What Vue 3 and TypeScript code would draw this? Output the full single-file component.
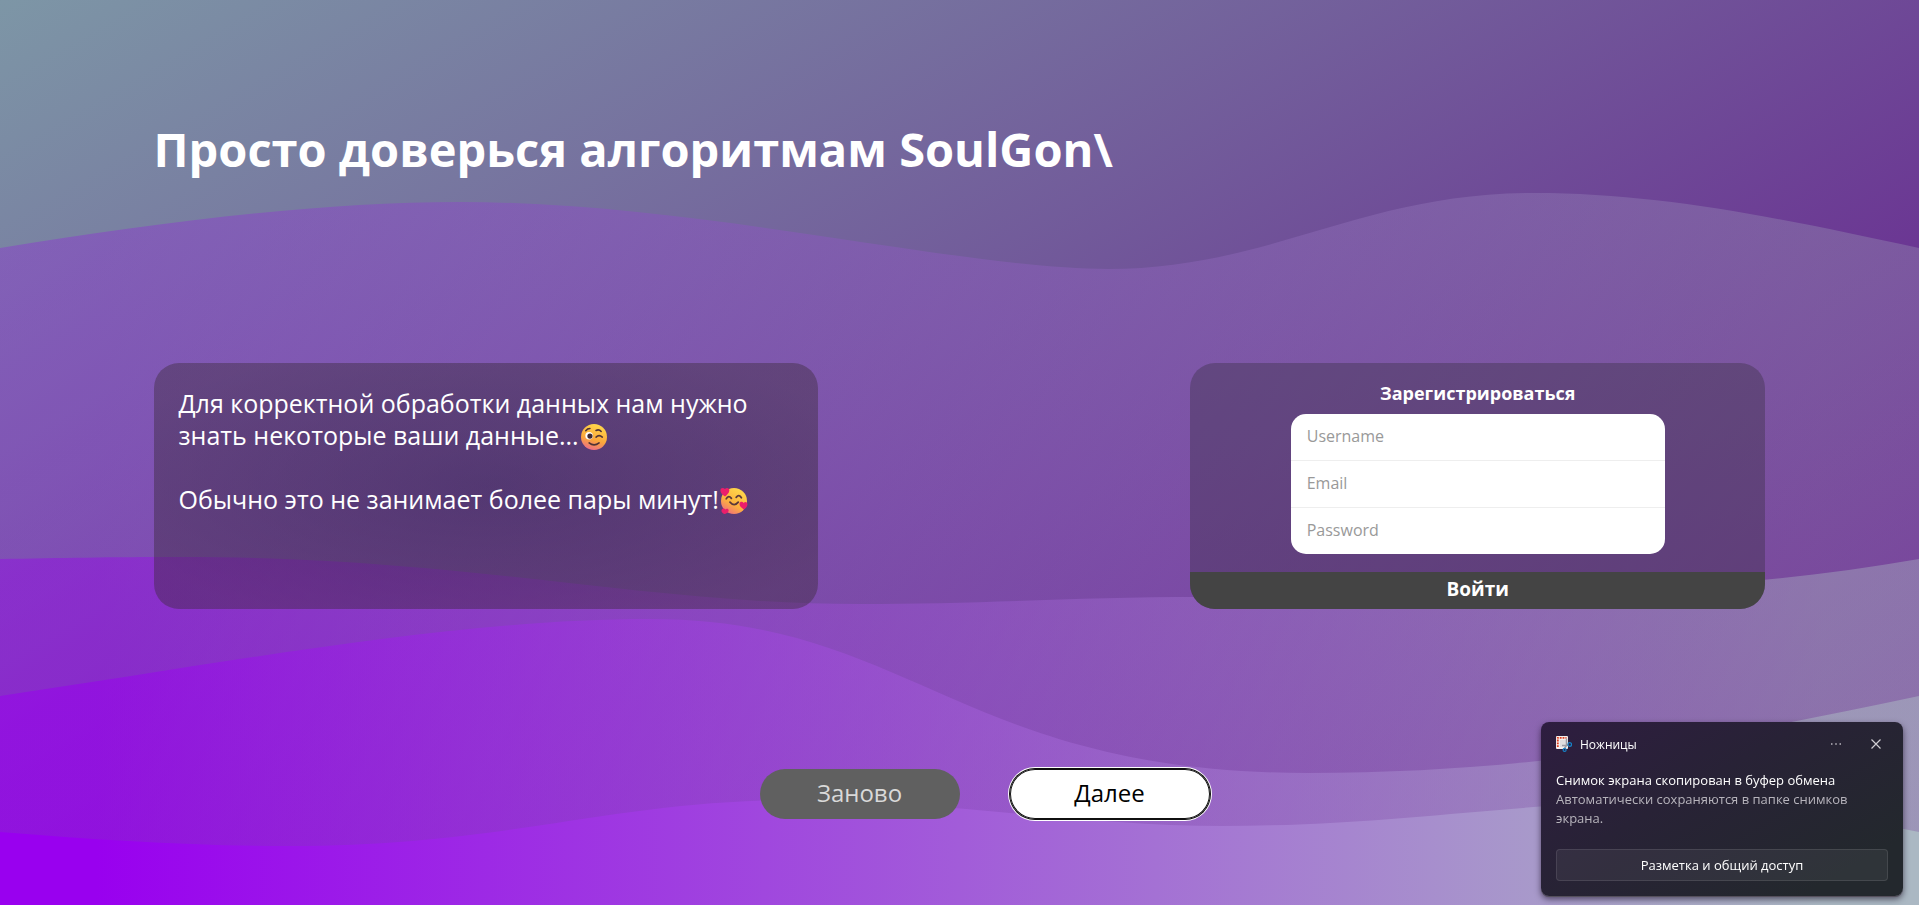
<script setup lang="ts">
import { ref } from 'vue'

interface Field {
  id: string
  type: string
  label: string
}

interface Wave {
  path: string
  opacity: number
}

const fields: Field[] = [
  { id: 'username', type: 'text', label: 'Username' },
  { id: 'email', type: 'email', label: 'Email' },
  { id: 'password', type: 'password', label: 'Password' },
]

const values = ref<Record<string, string>>({ username: '', email: '', password: '' })
const toastOpen = ref(true)

const waves: Wave[] = [
  {
    path: 'M0 248C160 222 320 202 459 202C700 202 960 269 1108 269C1270 269 1360 193 1534 193C1660 193 1780 218 1919 248V905H0Z',
    opacity: 0.265,
  },
  {
    path: 'M0 559C60 558 110 557 180 557C470 557 640 604 860 604C980 604 1080 597 1200 597C1480 597 1700 597 1919 559V905H0Z',
    opacity: 0.4,
  },
  {
    path: 'M0 696C220 664 450 619 650 619C910 619 960 773 1308 773C1540 773 1720 738 1919 696V905H0Z',
    opacity: 0.53,
  },
  {
    path: 'M0 832C100 840 190 846 290 846C510 846 610 800 800 800C940 800 1080 826 1222 826C1390 826 1520 802 1650 802C1760 802 1850 818 1919 832V905H0Z',
    opacity: 1,
  },
]
</script>

<template>
  <div class="page">
    <svg class="waves" viewBox="0 0 1919 905" preserveAspectRatio="none" aria-hidden="true">
      <defs>
        <linearGradient id="wave-fill" x1="0" y1="0" x2="1" y2="0">
          <stop offset="5%" stop-color="#9900ef" />
          <stop offset="95%" stop-color="#abb8c3" />
        </linearGradient>
      </defs>
      <path v-for="w in waves" :key="w.opacity" :d="w.path" fill="url(#wave-fill)" :fill-opacity="w.opacity" />
    </svg>

    <main class="content">
      <h1 class="title">Просто доверься алгоритмам SoulGon\</h1>

      <div class="cards">
        <section class="info">
          <p>
            Для корректной обработки данных нам нужно<br />
            знать некоторые ваши данные...<svg class="emoji" viewBox="0 0 25 25" role="img" aria-label="Подмигивание">
              <defs>
                <linearGradient id="wink-skin" x1="0.6" y1="0" x2="0.3" y2="1">
                  <stop offset="0" stop-color="#ffd84a" />
                  <stop offset="0.6" stop-color="#fba63c" />
                  <stop offset="1" stop-color="#ec6a8b" />
                </linearGradient>
              </defs>
              <circle cx="12.5" cy="12.5" r="12.5" fill="url(#wink-skin)" />
              <circle cx="7.8" cy="11.4" r="3.6" fill="#fff" />
              <circle cx="8.6" cy="11.6" r="2.5" fill="#3f2b33" />
              <path d="M14.5 12.6q2.8-2.8 6 0M4.6 6.4q1.6-2 4-2M14.4 6.2q3-1.4 5 1M7.8 18.2q4.8 3.8 9.6 0" fill="none" stroke="#4f3336" stroke-width="1.5" stroke-linecap="round" />
            </svg>
          </p>
          <p>
            Обычно это не занимает более пары минут!<svg class="emoji" viewBox="0 0 25 25" role="img" aria-label="Улыбка с сердечками">
              <defs>
                <linearGradient id="love-skin" x1="0.8" y1="0" x2="0.2" y2="1">
                  <stop offset="0" stop-color="#ffdc4c" />
                  <stop offset="0.6" stop-color="#fdb13e" />
                  <stop offset="1" stop-color="#f0697f" />
                </linearGradient>
              </defs>
              <circle cx="12.5" cy="12.5" r="12.5" fill="url(#love-skin)" />
              <path d="M5 10.4q2.3-4 5 -.4M14.6 9q2.8-3.4 5 .4M8.6 13.6q4.2 4.8 8 0" fill="none" stroke="#5a383b" stroke-width="1.7" stroke-linecap="round" />
              <g fill="#ec1e6b">
                <path d="M3.9 8.2C1.5 6.2-.6 4.6-.6 2.3-.6-.4 2.5-.8 3.8 1 5.3-.9 8.4-.1 8 2.6 7.7 4.8 6 6.5 3.9 8.2Z" />
                <path d="M22 20.6C19.3 18.8 17.6 17.2 17.8 15.2 18 12.9 20.8 12.7 21.8 14.4 23.2 12.8 25.7 13.6 25.4 16 25.1 17.9 23.8 19.3 22 20.6Z" />
                <path d="M3 25C1 24 .1 22.5.6 21 1.3 19.2 3.5 19.3 4.2 20.6 5.6 19.3 7.8 20.2 7.3 22.2 6.8 24 5 24.8 3 25Z" />
              </g>
            </svg>
          </p>
        </section>

        <form class="signup" @submit.prevent>
          <h2>Зарегистрироваться</h2>
          <div class="fields">
            <input
              v-for="f in fields"
              :id="f.id"
              :key="f.id"
              v-model="values[f.id]"
              :type="f.type"
              :placeholder="f.label"
              :aria-label="f.label"
            />
          </div>
          <button type="submit" class="login">Войти</button>
        </form>
      </div>

      <div class="actions">
        <button type="button" class="again">Заново</button>
        <button type="button" class="next">Далее</button>
      </div>
    </main>

    <aside v-if="toastOpen" class="toast">
      <header>
        <svg class="snip" viewBox="0 0 16 16" aria-hidden="true">
          <rect x="0" y="0" width="12" height="13" rx="1" fill="#f4efee" />
          <path d="M1.800 11V1.800H10.500" fill="none" stroke="#dd3b1c" stroke-width="1.800" stroke-dasharray="1.800 1" />
          <path d="M4 4h6.500v7H4z" fill="#e0dee0" />
          <path d="M10.500 2.500v7L8.500 12.500M6 9.500h4.500l2-.5" fill="none" stroke="#9c9aa3" stroke-width="1.500" />
          <circle cx="13.700" cy="8.500" r="1.800" fill="none" stroke="#1683c9" stroke-width="1.200" />
          <circle cx="8.600" cy="13.900" r="1.500" fill="none" stroke="#1683c9" stroke-width="1.200" />
        </svg>
        <span class="app">Ножницы</span>
        <button type="button" class="icon" aria-label="Параметры">
          <svg viewBox="0 0 12 12"><path d="M1 6h1.500M5.250 6h1.500M9.500 6H11" stroke="#b9b6be" stroke-width="1.500" /></svg>
        </button>
        <button type="button" class="icon" aria-label="Закрыть" @click="toastOpen = false">
          <svg viewBox="0 0 12 12"><path d="M1.500 1.500l9 9M10.500 1.500l-9 9" stroke="#d0ced3" stroke-width="1.200" /></svg>
        </button>
      </header>
      <p class="headline">Снимок экрана скопирован в буфер обмена</p>
      <p class="detail">Автоматически сохраняются в папке снимков экрана.</p>
      <button type="button" class="share">Разметка и общий доступ</button>
    </aside>
  </div>
</template>

<style>
body {
  margin: 0;
}
</style>

<style scoped>
.page {
  position: relative;
  min-height: 100vh;
  overflow: hidden;
  background: linear-gradient(150deg, #7d96a6 0%, #62088a 100%);
  color: #fff;
  font-family: "Open Sans", "Noto Sans", sans-serif;
}

.page *,
.page {
  box-sizing: border-box;
}

.waves {
  position: absolute;
  inset: 0;
  width: 100%;
  height: 100%;
}

.content {
  position: relative;
  padding: 118px 8% 64px;
}

.title {
  margin: 0 0 183px;
  font-size: 47px;
  font-weight: 700;
  line-height: 62px;
}

.cards {
  display: flex;
  justify-content: space-between;
  gap: 32px;
}

.info {
  width: 41.2%;
  padding: 24px 25px;
  border-radius: 25px;
  background: radial-gradient(rgba(14, 14, 14, 0.38), rgba(55, 40, 50, 0.4) 85%);
}

.info p {
  margin: 0 0 32px;
  font-size: 25px;
  font-weight: 500;
  line-height: 32px;
}

.emoji {
  width: 26px;
  height: 26px;
  margin-left: 2px;
  vertical-align: -5px;
  overflow: visible;
}

.signup {
  display: flex;
  flex-direction: column;
  align-items: center;
  width: 35.7%;
  padding-top: 18px;
  overflow: hidden;
  border-radius: 25px;
  background: rgba(36, 36, 36, 0.29);
}

.signup h2 {
  margin: 0 0 9px;
  font-size: 18px;
  line-height: 24px;
}

.fields {
  width: 65%;
  margin-bottom: 18px;
  overflow: hidden;
  border-radius: 15px;
  background: #fff;
}

.fields input {
  display: block;
  width: 100%;
  height: 47px;
  padding: 0 16px 2px;
  border: 0;
  border-bottom: 1px solid #eee;
  outline: 0;
  background: transparent;
  color: #333;
  font: inherit;
  font-size: 16px;
}

.fields input:last-child {
  height: 46px;
  border-bottom: 0;
}

.fields input::placeholder {
  color: #999;
  opacity: 1;
}

button {
  padding: 0;
  border: 0;
  font-family: inherit;
  cursor: pointer;
}

.login {
  width: 100%;
  height: 37px;
  padding-bottom: 4px;
  background: #444;
  color: #fff;
  font-size: 19px;
  font-weight: 700;
}

.actions {
  display: flex;
  justify-content: center;
  gap: 50px;
  margin-top: 160px;
  padding-left: 50px;
}

.actions button {
  width: 200px;
  height: 50px;
  padding-bottom: 4px;
  border-radius: 25px;
  font-size: 24px;
}

.again {
  background: #606060;
  color: #d9d9d9;
}

.next {
  background: #fff;
  color: #000;
  box-shadow: inset 0 0 0 1px #101010, 0 0 0 1px #101010, 0 0 0 2px #fff;
}

.toast {
  position: fixed;
  right: 16px;
  bottom: 9px;
  width: 362px;
  padding: 10px 15px 15px;
  border-radius: 8px;
  background: linear-gradient(150deg, #2e1d40 0%, #282236 40%, #23282d 85%);
  box-shadow: 0 1px 0 #55505c, 0 3px 6px rgba(20, 10, 30, 0.6);
  font-size: 13px;
}

.toast header {
  display: flex;
  align-items: center;
  height: 24px;
}

.snip {
  width: 16px;
  height: 16px;
}

.app {
  margin: 0 auto 0 8px;
  font-size: 12px;
}

.icon {
  display: grid;
  place-items: center;
  width: 24px;
  height: 24px;
  margin-left: 16px;
  background: transparent;
}

.icon svg {
  width: 12px;
  height: 12px;
}

.toast p {
  margin: 0;
  line-height: 19px;
}

.toast .headline {
  margin-top: 15px;
}

.toast .detail {
  margin-bottom: 21px;
  color: #b7b4bc;
}

.share {
  width: 100%;
  height: 32px;
  border: 1px solid rgba(255, 255, 255, 0.1);
  border-radius: 4px;
  background: rgba(255, 255, 255, 0.06);
  color: #fff;
  font-size: 13px;
}
</style>
